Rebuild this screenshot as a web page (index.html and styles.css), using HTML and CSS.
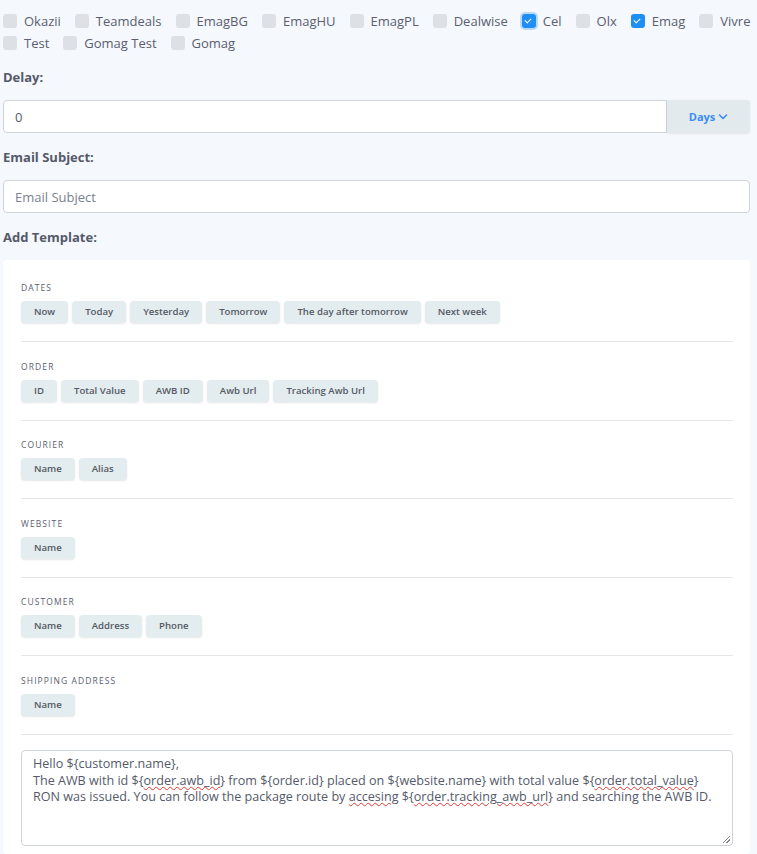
FILE: index.html
```html
<!DOCTYPE html>
<html>
<head>
    <meta charset="UTF-8">
    <title>Email Template</title>
    <link rel="stylesheet" href="styles.css">
</head>
<body>
    <div class="shops">
        <label class="shop"><span class="box"></span>Okazii</label>
        <label class="shop"><span class="box"></span>Teamdeals</label>
        <label class="shop"><span class="box"></span>EmagBG</label>
        <label class="shop"><span class="box"></span>EmagHU</label>
        <label class="shop"><span class="box"></span>EmagPL</label>
        <label class="shop"><span class="box"></span>Dealwise</label>
        <label class="shop"><span class="box checked focus"></span>Cel</label>
        <label class="shop"><span class="box"></span>Olx</label>
        <label class="shop"><span class="box checked"></span>Emag</label>
        <label class="shop"><span class="box"></span>Vivre</label>
        <label class="shop"><span class="box"></span>Test</label>
        <label class="shop"><span class="box"></span>Gomag Test</label>
        <label class="shop"><span class="box"></span>Gomag</label>
    </div>

    <div class="field-label">Delay:</div>
    <div class="input-group">
        <div class="input">0</div>
        <button class="unit-btn">Days
            <svg width="10" height="8" viewBox="0 0 10 8"><path d="M1.5 2 L5 5.5 L8.5 2" fill="none" stroke="currentColor" stroke-width="1.6" stroke-linecap="round" stroke-linejoin="round"/></svg>
        </button>
    </div>

    <div class="field-label">Email Subject:</div>
    <div class="input placeholder">Email Subject</div>

    <div class="field-label">Add Template:</div>
    <div class="card">
        <div class="group">
            <div class="group-title">Dates</div>
            <div class="chips">
                <span class="chip">Now</span>
                <span class="chip">Today</span>
                <span class="chip">Yesterday</span>
                <span class="chip">Tomorrow</span>
                <span class="chip">The day after tomorrow</span>
                <span class="chip">Next week</span>
            </div>
        </div>
        <div class="group">
            <div class="group-title">Order</div>
            <div class="chips">
                <span class="chip">ID</span>
                <span class="chip">Total Value</span>
                <span class="chip">AWB ID</span>
                <span class="chip">Awb Url</span>
                <span class="chip">Tracking Awb Url</span>
            </div>
        </div>
        <div class="group">
            <div class="group-title">Courier</div>
            <div class="chips">
                <span class="chip">Name</span>
                <span class="chip">Alias</span>
            </div>
        </div>
        <div class="group">
            <div class="group-title">Website</div>
            <div class="chips">
                <span class="chip">Name</span>
            </div>
        </div>
        <div class="group">
            <div class="group-title">Customer</div>
            <div class="chips">
                <span class="chip">Name</span>
                <span class="chip">Address</span>
                <span class="chip">Phone</span>
            </div>
        </div>
        <div class="group">
            <div class="group-title">Shipping Address</div>
            <div class="chips">
                <span class="chip">Name</span>
            </div>
        </div>

        <div class="editor">Hello ${customer.name},<br>The AWB with id ${<span class="typo">order.awb_id</span>} from ${order.id} placed on ${website.name} with total value ${<span class="typo">order.total_value</span>} RON was issued. You can follow the package route by <span class="typo">accesing</span> ${<span class="typo">order.tracking_awb_url</span>} and searching the AWB ID.<span class="grip"></span></div>
    </div>
</body>
</html>
```

FILE: styles.css
```css
body {
    margin: 0;
    padding: 10px 7px 0 3px;
    background: #f5f8fc;
    font-family: "Open Sans", sans-serif;
    color: #5a5e70;
}
.shops {
    display: flex;
    flex-wrap: wrap;
    column-gap: 14px;
    margin-right: -7px;
    margin-bottom: -1px;
}
.shop {
    display: flex;
    align-items: center;
    gap: 7px;
    height: 22px;
    font-size: 13px;
}
.box {
    width: 14px;
    height: 14px;
    border-radius: 3px;
    background: #dde0e5;
    position: relative;
}
.box.checked {
    background: #1f8ff5;
}
.box.checked::after {
    content: "";
    position: absolute;
    left: 4.5px;
    top: 3px;
    width: 3px;
    height: 5px;
    border: solid #fff;
    border-width: 0 1.6px 1.6px 0;
    transform: rotate(45deg);
}
.box.focus {
    box-shadow: 0 0 0 2px #b9dafb;
}
.field-label {
    font-size: 13px;
    font-weight: 700;
    color: #555a6a;
    margin: 15px 0 14px;
    line-height: 18px;
}
.input-group {
    display: flex;
}
.input {
    flex: 1;
    height: 33px;
    box-sizing: border-box;
    padding: 0 11px;
    display: flex;
    align-items: center;
    background: #fff;
    border: 1px solid #cfd3da;
    border-radius: 4px;
    font-size: 13px;
    color: #555a6a;
}
.input-group .input {
    border-radius: 4px 0 0 4px;
}
.input.placeholder {
    color: #7b8090;
}
.unit-btn {
    width: 83px;
    height: 33px;
    border: none;
    border-radius: 0 4px 4px 0;
    background: #e3eaed;
    box-shadow: 0 1px 3px rgba(0, 0, 0, 0.08);
    color: #3a8cf0;
    font-family: inherit;
    font-size: 11px;
    font-weight: 700;
    display: flex;
    align-items: center;
    justify-content: center;
    gap: 3px;
}
.card {
    background: #fff;
    border-radius: 4px;
    padding: 22px 17px 8px 18px;
}
.group {
    border-bottom: 1px solid #e4e6e9;
    padding-bottom: 18px;
    margin-bottom: 18.5px;
}
.group-title {
    font-size: 8.5px;
    line-height: 12px;
    letter-spacing: 1.1px;
    text-transform: uppercase;
    color: #5a5e70;
    margin-bottom: 7px;
}
.chips {
    display: flex;
    flex-wrap: wrap;
    gap: 4px;
}
.chip {
    height: 22px;
    line-height: 22px;
    padding: 0 13px;
    border-radius: 4px;
    background: #e3ecee;
    box-shadow: 0 1px 2px rgba(0, 0, 0, 0.1);
    font-size: 9.6px;
    font-weight: 600;
    color: #555a66;
}
.editor {
    position: relative;
    height: 96px;
    box-sizing: border-box;
    padding: 5px 11px;
    margin-top: -3px;
    border: 1px solid #cfd3da;
    border-radius: 4px;
    font-size: 12.6px;
    line-height: 16.5px;
    color: #555a6a;
}
.typo {
    text-decoration: underline wavy #e53935;
    text-decoration-thickness: 1px;
}
.grip {
    position: absolute;
    right: 2px;
    bottom: 2px;
    width: 7px;
    height: 7px;
    background: linear-gradient(135deg, transparent 45%, #888 46%, #888 54%, transparent 55%, transparent 70%, #888 71%, #888 79%, transparent 80%);
}
```
